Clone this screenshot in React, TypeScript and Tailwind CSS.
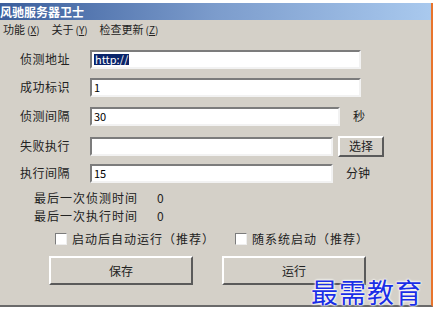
import React from "react";

const font = "font-['Noto_Sans_CJK_SC','Noto_Sans',sans-serif]";
const sunken =
  "bg-white border-2 border-t-[#7c7c7c] border-l-[#7c7c7c] border-r-[#f2f2f2] border-b-[#f2f2f2] h-[19px] flex items-center px-[2px] text-[11px] text-black leading-none";
const raised =
  "bg-[#d4d0c8] border-2 border-t-white border-l-white border-r-[#5a5a5a] border-b-[#5a5a5a] flex items-center justify-center text-[12px] text-[#222]";

const Field = ({
  label,
  value,
  width,
  mt,
  selected,
  children,
}: {
  label: string;
  value: string;
  width: string;
  mt: string;
  selected?: boolean;
  children?: React.ReactNode;
}) => (
  <div className={`flex items-center h-[20px] ${mt}`}>
    <span className="w-[90px] pl-[20px] text-[12px] text-[#222] tracking-[0.5px]">{label}</span>
    <div className={`${sunken} ${width}`}>
      {selected ? (
        <span className="bg-[#0a246a] text-white px-[1px]">{value}</span>
      ) : (
        value
      )}
    </div>
    {children}
  </div>
);

const Check = ({ label }: { label: string }) => (
  <div className="flex items-center gap-[5px]">
    <div className="w-[12px] h-[12px] bg-white border border-t-[#7c7c7c] border-l-[#7c7c7c] border-r-[#eeeeee] border-b-[#eeeeee]" />
    <span className="text-[12px] text-[#222] tracking-[1px]">{label}</span>
  </div>
);

const Menu = ({ name, k }: { name: string; k: string }) => (
  <span className="text-[11px] text-[#222]">
    {name}
    <span className="text-[10px] ml-[2px]">
      (<span className="underline">{k}</span>)
    </span>
  </span>
);

export default function App() {
  return (
    <div className={`w-[433px] h-[325px] bg-white relative ${font}`}>
      <div className="pt-[3px] h-[307px] flex flex-col">
        <div className="flex-1 flex flex-col bg-[#d4d0c8] border-r-2 border-r-[#e8742c] border-b-2 border-b-[#6a6a6a]">
          <div className="h-[17px] bg-gradient-to-r from-[#3b5e9c] via-[#7c9ccc] to-[#a9c9ee] flex items-center">
            <span className="text-white text-[12px] font-bold leading-none">风驰服务器卫士</span>
          </div>
          <div className="h-[18px] flex items-center pl-[3px] gap-[12px]">
            <Menu name="功能" k="X" />
            <Menu name="关于" k="Y" />
            <Menu name="检查更新" k="Z" />
          </div>

          <Field label="侦测地址" value="http://" width="w-[271px]" mt="mt-[11px]" selected />
          <Field label="成功标识" value="1" width="w-[271px]" mt="mt-[8px]" />
          <Field label="侦测间隔" value="30" width="w-[250px]" mt="mt-[9px]">
            <span className="ml-[13px] text-[12px] text-[#222]">秒</span>
          </Field>
          <Field label="失败执行" value="" width="w-[243px]" mt="mt-[10px]">
            <div className={`${raised} ml-[5px] w-[46px] h-[21px]`}>选择</div>
          </Field>
          <Field label="执行间隔" value="15" width="w-[243px]" mt="mt-[7px]">
            <span className="ml-[13px] text-[12px] text-[#222]">分钟</span>
          </Field>

          <div className="flex flex-col pl-[34px] mt-[6px] text-[12px] text-[#222] tracking-[1px]">
            <div className="flex h-[18px] items-center">
              <span className="w-[123px]">最后一次侦测时间</span>
              <span>0</span>
            </div>
            <div className="flex h-[18px] items-center">
              <span className="w-[123px]">最后一次执行时间</span>
              <span>0</span>
            </div>
          </div>

          <div className="flex pl-[55px] mt-[6px] h-[16px] items-center">
            <div className="w-[180px]">
              <Check label="启动后自动运行（推荐）" />
            </div>
            <Check label="随系统启动（推荐）" />
          </div>

          <div className="flex pl-[49px] gap-[29px] mt-[9px]">
            <div className={`${raised} w-[144px] h-[29px]`}>保存</div>
            <div className={`${raised} w-[144px] h-[29px]`}>运行</div>
          </div>
        </div>
      </div>

      <div className="absolute left-[311px] top-[278px] text-[27px] leading-none text-[#1a2ee6] tracking-[1px] [text-shadow:0_0_2px_#fff,0_0_2px_#fff,0_0_3px_#fff]">
        最需教育
      </div>
    </div>
  );
}
